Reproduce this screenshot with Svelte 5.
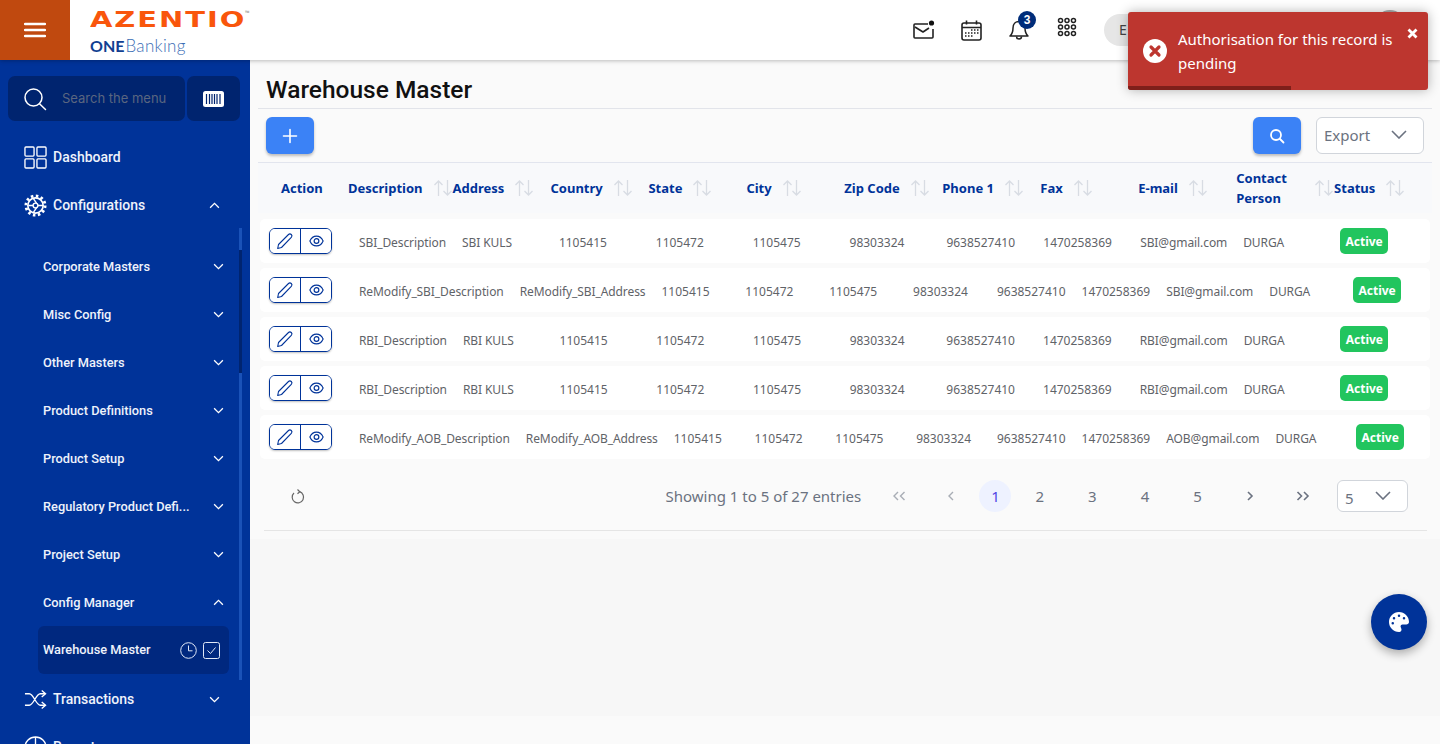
<script>
	const subItems = [
		'Corporate Masters',
		'Misc Config',
		'Other Masters',
		'Product Definitions',
		'Product Setup',
		'Regulatory Product Defi...',
		'Project Setup'
	];

	const columns = ['Description', 'Address', 'Country', 'State', 'City', 'Zip Code', 'Phone 1', 'Fax', 'E-mail', 'Contact Person', 'Status'];

	const rows = [
		{ desc: 'SBI_Description', addr: 'SBI KULS', email: 'SBI@gmail.com', country: '1105415', state: '1105472' },
		{ desc: 'ReModify_SBI_Description', addr: 'ReModify_SBI_Address', email: 'SBI@gmail.com', country: '1105415', state: '1105472' },
		{ desc: 'RBI_Description', addr: 'RBI KULS', email: 'RBI@gmail.com', country: '1105415', state: '1105472' },
		{ desc: 'RBI_Description', addr: 'RBI KULS', email: 'RBI@gmail.com', country: '1105415', state: '1105472' },
		{ desc: 'ReModify_AOB_Description', addr: 'ReModify_AOB_Address', email: 'AOB@gmail.com', country: '1105415', state: '1105472' }
	];

	const pages = ['1', '2', '3', '4', '5'];
</script>

<div class="app">
	<header class="topbar">
		<button class="burger" aria-label="menu">
			<svg width="22" height="16" viewBox="0 0 22 16" fill="none" stroke="#fff" stroke-width="2.4" stroke-linecap="round"><path d="M1 2h20M1 8h20M1 14h20" /></svg>
		</button>
		<div class="logo">
			<div class="azentio"><span>AZENTIO</span><i>™</i></div>
			<div class="onebanking"><b>ONE</b>Banking</div>
		</div>
		<div class="top-right">
			<svg class="ticon" viewBox="0 0 24 24" fill="none" stroke="#222" stroke-width="1.6" stroke-linejoin="round">
				<path d="M17 6H4a1 1 0 0 0-1 1v12a1 1 0 0 0 1 1h17a1 1 0 0 0 1-1v-8" />
				<path d="M4 9l8 5 6-4" />
				<circle cx="20.5" cy="5" r="2.6" fill="#111" stroke="none" />
			</svg>
			<svg class="ticon" viewBox="0 0 24 24" fill="none" stroke="#222" stroke-width="1.6">
				<rect x="3" y="5" width="19" height="17" rx="2" />
				<path d="M3 9.5h19M7.5 2.5v4M17.5 2.5v4" />
				<path d="M12 12h1.5M15 12h1.5M18 12h1.5M6 15h1.5M9 15h1.5M12 15h1.5M15 15h1.5M18 15h1.5M6 18h1.5M9 18h1.5M12 18h1.5" stroke-width="1.6" />
			</svg>
			<div class="bell">
				<svg class="ticon" viewBox="0 0 24 24" fill="none" stroke="#222" stroke-width="1.5" stroke-linejoin="round">
					<path d="M12 3.5c-3.6 0-6 2.8-6 6.5 0 4.500-1.300 6.500-3 8h18c-1.700-1.500-3-3.500-3-8 0-3.700-2.400-6.500-6-6.500z" />
					<path d="M9.500 18.500a2.500 2.500 0 0 0 5 0" />
				</svg>
				<span class="badge">3</span>
			</div>
			<svg class="ticon grid" viewBox="-1 -1 26 26" fill="none" stroke="#222" stroke-width="1.600">
				{#each [5, 12, 19] as y}
					{#each [5, 12, 19] as x}
						<circle cx={x} cy={y} r="2.200" />
					{/each}
				{/each}
			</svg>
			<div class="pill">E</div>
			<div class="avatar"></div>
		</div>
	</header>

	<div class="body">
		<aside class="sidebar">
			<div class="search-row">
				<div class="search-box">
					<svg width="24" height="24" viewBox="0 0 24 24" fill="none" stroke="#fff" stroke-width="1.500" stroke-linecap="round"><circle cx="10.500" cy="10.500" r="8.500" /><path d="M16.500 16.800l6 5.700" /></svg>
					<span>Search the menu</span>
				</div>
				<div class="barcode">
					<svg width="21" height="16" viewBox="0 0 21 16"><rect width="21" height="16" rx="2.500" fill="#fff" /><path d="M3.500 3v10M6.500 3v10M9 3v10M11.500 3v10M14 3v10M17 3v10" stroke="#00246f" stroke-width="1.200" /></svg>
				</div>
			</div>

			<nav class="menu">
				<div class="item">
					<svg class="micon" viewBox="0 0 24 24" fill="none" stroke="#fff" stroke-width="1.400"><rect x="1" y="1" width="9.500" height="9.500" rx="1" /><rect x="13.500" y="1" width="9.500" height="9.500" rx="1" /><rect x="1" y="13.500" width="9.500" height="9.500" rx="1" /><rect x="13.500" y="13.500" width="9.500" height="9.500" rx="1" /></svg>
					<span>Dashboard</span>
				</div>
				<div class="item">
					<svg class="micon" viewBox="0 0 24 24" fill="none" stroke="#fff">
						<circle cx="12" cy="12" r="10" stroke-width="3" stroke-dasharray="2.600 2.640" />
						<circle cx="12" cy="12" r="8" stroke-width="1.700" />
						<circle cx="12" cy="12" r="2.500" stroke-width="1.500" />
						<path d="M10 5l3 4.600M14.500 12H20M13 14.400L10 19M9.500 12H4.500" stroke-width="1.500" />
					</svg>
					<span>Configurations</span>
					<svg class="chev" viewBox="0 0 12 8" fill="none" stroke="#fff" stroke-width="1.500"><path d="M1 6.500l5-5 5 5" /></svg>
				</div>

				<div class="sub">
					{#each subItems as label}
						<div class="sub-item">
							<span>{label}</span>
							<svg class="chev" viewBox="0 0 12 8" fill="none" stroke="#fff" stroke-width="1.500"><path d="M1 1.500l5 5 5-5" /></svg>
						</div>
					{/each}
					<div class="sub-item">
						<span>Config Manager</span>
						<svg class="chev" viewBox="0 0 12 8" fill="none" stroke="#fff" stroke-width="1.500"><path d="M1 6.500l5-5 5 5" /></svg>
					</div>
					<div class="leaf">
						<span>Warehouse Master</span>
						<svg width="17" height="17" viewBox="0 0 17 17" fill="none" stroke="#dfe7f7" stroke-width="1"><circle cx="8.500" cy="8.500" r="7.800" /><path d="M8.500 3.500v5.300h4" /></svg>
						<svg width="17" height="17" viewBox="0 0 17 17" fill="none" stroke="#dfe7f7" stroke-width="1"><rect x=".5" y=".5" width="16" height="16" rx="2" /><path d="M4.500 8.500l3 3 5-6" /></svg>
					</div>
				</div>

				<div class="item">
					<svg class="micon" viewBox="0 0 24 24" fill="none" stroke="#fff" stroke-width="1.400"><path d="M1 6h4.500c4.500 0 7 12 11.500 12h5M1 18h4.500c4.500 0 7-12 11.500-12h5" /><path d="M18.500 2.500L22.500 6l-4 3.500M18.500 14.500l4 3.500-4 3.500" /></svg>
					<span>Transactions</span>
					<svg class="chev" viewBox="0 0 12 8" fill="none" stroke="#fff" stroke-width="1.500"><path d="M1 1.500l5 5 5-5" /></svg>
				</div>
				<div class="item">
					<svg class="micon" viewBox="0 0 24 24" fill="none" stroke="#fff" stroke-width="1.400"><circle cx="12" cy="12" r="11" /><path d="M12 1v11H1M12 12l8 8" /></svg>
					<span>Reports</span>
				</div>
			</nav>
			<div class="side-scroll"><div></div></div>
		</aside>

		<main class="main">
			<section class="panel">
				<h1>Warehouse Master</h1>
				<div class="toolbar">
					<button class="blue" aria-label="add">
						<svg width="16" height="16" viewBox="0 0 16 16" fill="none" stroke="#fff" stroke-width="1.600" stroke-linecap="round"><path d="M8 1.500v13M1.500 8h13" /></svg>
					</button>
					<button class="blue right" aria-label="search">
						<svg width="16" height="16" viewBox="0 0 16 16" fill="none" stroke="#fff" stroke-width="1.800" stroke-linecap="round"><circle cx="7" cy="7" r="5" /><path d="M11 11l3.500 3.500" /></svg>
					</button>
					<div class="select export">
						<span>Export</span>
						<svg width="16" height="9" viewBox="0 0 16 9" fill="none" stroke="#6b7280" stroke-width="1.600"><path d="M1 1l7 7 7-7" /></svg>
					</div>
				</div>

				<div class="thead">
					<div class="th-action">Action</div>
					<div class="th-cells">
						{#each columns as col}
							<div class="th">
								<span>{col}</span>
								<svg width="20" height="18" viewBox="0 0 20 18" fill="none" stroke="#d8dce3" stroke-width="1.300"><path d="M5.500 17V2M1.500 6l4-4 4 4M14.500 1v15M10.500 12l4 4 4-4" /></svg>
							</div>
						{/each}
					</div>
				</div>

				<div class="rows">
					{#each rows as r}
						<div class="row">
							<div class="actions">
								<div class="btn-group">
									<button aria-label="edit">
										<svg width="18" height="18" viewBox="0 0 18 18" fill="none" stroke="#003399" stroke-width="1.100" stroke-linejoin="round"><path d="M2.500 12.500L12.500 2.500c.8-.8 2-.8 2.800 0s.8 2 0 2.800L5.500 15.500l-3.800 1z" /></svg>
									</button>
									<button aria-label="view">
										<svg width="15" height="12" viewBox="0 0 17 13" fill="none" stroke="#003399" stroke-width="1.300"><path d="M1 6.500C2.500 3 5 1 8.500 1S14.500 3 16 6.500C14.500 10 12 12 8.500 12S2.500 10 1 6.500z" /><circle cx="8.500" cy="6.500" r="2.700" /></svg>
									</button>
								</div>
							</div>
							<div class="cells">
								<div class="td txt">{r.desc}</div>
								<div class="td txt">{r.addr}</div>
								<div class="td">{r.country}</div>
								<div class="td">{r.state}</div>
								<div class="td">1105475</div>
								<div class="td">98303324</div>
								<div class="td">9638527410</div>
								<div class="td">1470258369</div>
								<div class="td txt">{r.email}</div>
								<div class="td txt">DURGA</div>
								<div class="td st"><span class="status">Active</span></div>
							</div>
						</div>
					{/each}
				</div>

				<div class="pager">
					<svg class="refresh" width="14" height="15" viewBox="0 0 14 15" fill="none" stroke="#666" stroke-width="1.200"><path d="M8.500 2.700A5.700 5.700 0 1 1 3 4" /><path d="M6.500 .5l2.300 2.200-2.300 2" /></svg>
					<span class="showing">Showing 1 to 5 of 27 entries</span>
					<div class="pg dim">
						<svg width="14" height="10" viewBox="0 0 14 10" fill="none" stroke="#a8adb5" stroke-width="1.400"><path d="M6 1L2 5l4 4M12.500 1l-4 4 4 4" /></svg>
					</div>
					<div class="pg dim">
						<svg width="8" height="10" viewBox="0 0 8 10" fill="none" stroke="#a8adb5" stroke-width="1.400"><path d="M6 1L2 5l4 4" /></svg>
					</div>
					{#each pages as p, i}
						<div class="pg" class:active={i === 0}><span>{p}</span></div>
					{/each}
					<div class="pg">
						<svg width="8" height="10" viewBox="0 0 8 10" fill="none" stroke="#6b7280" stroke-width="1.600"><path d="M2 1l4 4-4 4" /></svg>
					</div>
					<div class="pg">
						<svg width="14" height="10" viewBox="0 0 14 10" fill="none" stroke="#6b7280" stroke-width="1.600"><path d="M1.500 1l4 4-4 4M8 1l4 4-4 4" /></svg>
					</div>
					<div class="select size">
						<span>5</span>
						<svg width="16" height="9" viewBox="0 0 16 9" fill="none" stroke="#6b7280" stroke-width="1.600"><path d="M1 1l7 7 7-7" /></svg>
					</div>
				</div>
			</section>
			<div class="spacer"></div>
			<div class="footer"></div>
		</main>
	</div>

	<button class="fab" aria-label="theme">
		<svg width="20" height="20" viewBox="0 0 512 512" fill="#fff"><path d="M512 256c0 .9 0 1.800 0 2.700c-.4 36.500-33.600 61.300-70.100 61.300H344c-26.500 0-48 21.500-48 48c0 3.400 .4 6.700 1 9.900c2.100 10.200 6.500 20 10.800 29.900c6.100 13.800 12.100 27.500 12.100 42c0 31.800-21.600 60.700-53.400 62c-3.500 .1-7 .2-10.600 .2C114.600 512 0 397.400 0 256S114.600 0 256 0S512 114.600 512 256zM128 288a32 32 0 1 0 -64 0 32 32 0 1 0 64 0zm0-96a32 32 0 1 0 0-64 32 32 0 1 0 0 64zM288 96a32 32 0 1 0 -64 0 32 32 0 1 0 64 0zm96 96a32 32 0 1 0 0-64 32 32 0 1 0 0 64z" /></svg>
	</button>

	<div class="toast">
		<svg class="toast-icon" width="24" height="24" viewBox="0 0 24 24"><circle cx="12" cy="12" r="12" fill="#fff" /><path d="M8 8l8 8M16 8l-8 8" stroke="#bd362f" stroke-width="3.200" stroke-linecap="round" /></svg>
		<p>Authorisation for this record is pending</p>
		<svg class="toast-close" width="11" height="11" viewBox="0 0 11 11"><path d="M1.500 1.500l8 8M9.500 1.500l-8 8" stroke="#fff" stroke-width="2.800" /></svg>
		<div class="progress"></div>
	</div>
</div>

<style>
	:global(body) {
		margin: 0;
		overflow: hidden;
		font-family: 'Noto Sans', sans-serif;
	}

	.app {
		position: relative;
		width: 1440px;
		height: 744px;
		overflow: hidden;
		display: flex;
		flex-direction: column;
		background: #f7f7f7;
	}

	button {
		border: none;
		padding: 0;
		cursor: pointer;
		display: flex;
		align-items: center;
		justify-content: center;
	}

	/* top bar */
	.topbar {
		height: 60px;
		flex: none;
		display: flex;
		align-items: stretch;
		background: #fff;
		box-shadow: 0 1px 4px rgba(0, 0, 0, 0.25);
		position: relative;
		z-index: 2;
	}

	.burger {
		width: 70px;
		background: #c0490f;
	}

	.logo {
		margin-left: 20px;
		display: flex;
		flex-direction: column;
	}

	.azentio {
		margin-top: 8px;
		height: 24px;
		position: relative;
		width: 160px;
	}

	.azentio span {
		display: inline-block;
		font-family: 'DejaVu Sans', sans-serif;
		font-weight: 700;
		font-size: 21px;
		line-height: 24px;
		letter-spacing: 1.400px;
		color: #f9560c;
		transform: scaleX(1.380);
		transform-origin: left;
	}

	.azentio i {
		position: absolute;
		left: 155px;
		top: 1px;
		font-size: 6px;
		line-height: 8px;
		font-style: normal;
		color: #888;
	}

	.onebanking {
		margin-top: 3px;
		font-family: 'Lato', sans-serif;
		font-size: 17px;
		line-height: 22px;
		font-weight: 300;
		letter-spacing: 0.300px;
		color: #3a6db5;
	}

	.onebanking b {
		font-size: 16px;
		font-weight: 700;
		letter-spacing: 0;
		margin-right: 1px;
		color: #123f91;
	}

	.top-right {
		margin-left: auto;
		padding-right: 35px;
		display: flex;
		align-items: center;
		gap: 24px;
	}

	.ticon {
		width: 24px;
		height: 24px;
		display: block;
	}

	.bell {
		position: relative;
	}

	.grid {
		margin-top: -6px;
	}

	.badge {
		position: absolute;
		top: -7px;
		right: -5px;
		width: 18px;
		height: 18px;
		border-radius: 50%;
		background: #002d7a;
		color: #fff;
		font-family: 'Liberation Sans', sans-serif;
		font-size: 12px;
		font-weight: 700;
		line-height: 18px;
		text-align: center;
	}

	.pill {
		width: 241px;
		height: 32px;
		padding-left: 15px;
		margin-left: 1px;
		border-radius: 16px;
		background: #e6e6e6;
		font-size: 14px;
		line-height: 32px;
		color: #444;
	}

	.avatar {
		width: 30px;
		height: 30px;
		margin: -10px 0 0 -9px;
		border-radius: 50%;
		background: #aaa;
	}

	/* sidebar */
	.body {
		flex: 1;
		display: flex;
		min-height: 0;
	}

	.sidebar {
		width: 250px;
		flex: none;
		position: relative;
		background: #003399;
		color: #eef2fb;
		font-family: 'Roboto', sans-serif;
		font-weight: 500;
		overflow: hidden;
	}

	.search-row {
		display: flex;
		gap: 2px;
		margin: 16px 10px 12px 8px;
		height: 45px;
	}

	.search-box,
	.barcode {
		background: #00246f;
		border-radius: 7px;
		display: flex;
		align-items: center;
	}

	.search-box {
		width: 177px;
		padding-left: 15px;
		box-sizing: border-box;
		gap: 15px;
		font-family: 'Inter', sans-serif;
		font-weight: 400;
		font-size: 13px;
		color: #5a6680;
		white-space: nowrap;
	}

	.search-box span {
		margin-top: -2px;
	}

	.barcode {
		width: 53px;
		justify-content: center;
	}

	.item {
		height: 48px;
		padding-left: 24px;
		padding-right: 30px;
		display: flex;
		align-items: center;
		font-size: 14px;
	}

	.micon {
		width: 23px;
		height: 23px;
		margin-right: 6px;
		flex: none;
	}

	.chev {
		width: 11px;
		height: 7px;
		margin-left: auto;
		flex: none;
	}

	.sub {
		padding: 13px 0 1px 43px;
		font-size: 12.800px;
	}

	.sub-item {
		height: 48px;
		display: flex;
		align-items: center;
		padding-right: 26px;
	}

	.leaf {
		height: 48px;
		margin: 0 21px 0 -5px;
		padding: 0 9px 0 5px;
		display: flex;
		align-items: center;
		gap: 6px;
		background: #00287f;
		border-radius: 6px;
	}

	.leaf span {
		margin: -2px auto 0 0;
	}

	.side-scroll {
		position: absolute;
		left: 239px;
		top: 168px;
		width: 3px;
		height: 452px;
		background: #1a52b8;
	}

	.side-scroll div {
		margin-top: 22px;
		height: 123px;
		background: #00246f;
	}

	/* main */
	.main {
		flex: 1;
		min-width: 0;
		display: flex;
		flex-direction: column;
	}

	.panel {
		background: #fafafa;
		padding: 0 8px;
		height: 479px;
		flex: none;
		box-sizing: border-box;
	}

	h1 {
		margin: 0;
		height: 49px;
		box-sizing: border-box;
		padding: 17px 0 0 8px;
		font-family: 'Roboto', sans-serif;
		font-size: 24.500px;
		font-weight: 500;
		line-height: 26px;
		color: #111;
		border-bottom: 1px solid #e2e4ea;
	}

	.toolbar {
		height: 54px;
		box-sizing: border-box;
		padding: 8px 8px 0;
		display: flex;
		align-items: flex-start;
		border-bottom: 1px solid #e2e5ee;
	}

	.blue {
		width: 48px;
		height: 37px;
		border-radius: 6px;
		background: #3b82f6;
		box-shadow: 0 2px 3px rgba(0, 0, 0, 0.25);
	}

	.blue.right {
		margin-left: auto;
	}

	.select {
		box-sizing: border-box;
		display: flex;
		align-items: center;
		justify-content: space-between;
		background: #fff;
		border: 1px solid #d1d5db;
		border-radius: 6px;
		color: #6b7280;
	}

	.export {
		width: 108px;
		height: 37px;
		margin-left: 15px;
		padding: 0 16px 2px 7px;
		font-size: 15px;
	}

	.thead {
		height: 50px;
		margin-bottom: 6px;
		display: flex;
		align-items: center;
		background: #f8f9fb;
		color: #003399;
		font-size: 13px;
		font-weight: 700;
		line-height: 20px;
	}

	.th-action {
		width: 90px;
		flex: none;
		padding-left: 23px;
		box-sizing: border-box;
	}

	.th-cells {
		flex: 1;
		display: flex;
		min-width: 0;
	}

	.th {
		flex: 1 1 0;
		display: flex;
		align-items: center;
		gap: 10px;
	}

	.th svg {
		flex: none;
	}

	.rows {
		margin: 0 2px;
		display: flex;
		flex-direction: column;
		gap: 5px;
	}

	.row {
		height: 44px;
		display: flex;
		align-items: center;
		background: #fff;
		border-radius: 5px;
	}

	.actions {
		width: 99px;
		flex: none;
		padding-left: 9px;
		box-sizing: border-box;
	}

	.btn-group {
		display: flex;
		width: 63px;
		height: 26px;
		box-sizing: border-box;
		border: 1.500px solid #003399;
		border-radius: 6px;
		box-shadow: 0 1px 2px rgba(0, 0, 0, 0.25);
		overflow: hidden;
	}

	.btn-group button {
		flex: 1;
		background: #fff;
	}

	.btn-group button + button {
		border-left: 1.500px solid #003399;
	}

	.cells {
		flex: 1;
		min-width: 0;
		display: flex;
		align-items: center;
		margin-right: -7px;
	}

	.td {
		flex: 1 1 0;
		padding: 2px 16px 0 0;
		font-size: 12px;
		color: #5f6368;
		white-space: nowrap;
	}

	.td.txt {
		letter-spacing: -0.090px;
	}

	.td.st {
		padding-top: 0;
		display: flex;
	}

	.status {
		display: inline-block;
		width: 48px;
		height: 26px;
		border-radius: 5px;
		background: #22c55e;
		color: #fff;
		font-weight: 700;
		line-height: 28px;
		text-align: center;
	}

	.pager {
		height: 72px;
		padding-top: 3px;
		margin: 0 5px 0 6px;
		display: flex;
		align-items: center;
		border-bottom: 1px solid #e5e5e5;
		box-sizing: border-box;
		color: #6b7280;
		font-size: 15px;
	}

	.refresh {
		margin-left: 27px;
	}

	.showing {
		margin-left: auto;
		margin-right: 11px;
	}

	.pg {
		width: 52.600px;
		height: 32px;
		display: flex;
		align-items: center;
		justify-content: center;
		flex: none;
	}

	.pg.active {
		width: 32px;
		margin: 0 2px;
		border-radius: 50%;
		background: #eef2ff;
		color: #4f46e5;
	}

	.size {
		width: 71px;
		height: 32px;
		margin: 0 19px 0 8px;
		padding: 3px 16px 0 7px;
	}

	.size svg {
		margin-top: -5px;
	}

	.spacer {
		flex: 1;
	}

	.footer {
		height: 28px;
		background: #fafafa;
		flex: none;
	}

	/* overlays */
	.fab {
		position: absolute;
		left: 1371px;
		top: 594px;
		width: 56px;
		height: 56px;
		border-radius: 50%;
		background: #003399;
		box-shadow: 0 4px 10px rgba(0, 0, 0, 0.3);
	}

	.toast {
		position: absolute;
		left: 1128px;
		top: 12px;
		width: 300px;
		height: 78px;
		z-index: 5;
		box-sizing: border-box;
		background: #bd362f;
		border-radius: 3px;
		box-shadow: 0 0 12px rgba(0, 0, 0, 0.3);
		overflow: hidden;
		color: #fff;
	}

	.toast p {
		margin: 15px 20px 0 50px;
		font-size: 15px;
		line-height: 24px;
	}

	.toast-icon {
		position: absolute;
		left: 15px;
		top: 27px;
	}

	.toast-close {
		position: absolute;
		left: 279px;
		top: 16px;
	}

	.progress {
		position: absolute;
		left: 0;
		bottom: 0;
		width: 163px;
		height: 4px;
		background: #7f1f1a;
	}
</style>
